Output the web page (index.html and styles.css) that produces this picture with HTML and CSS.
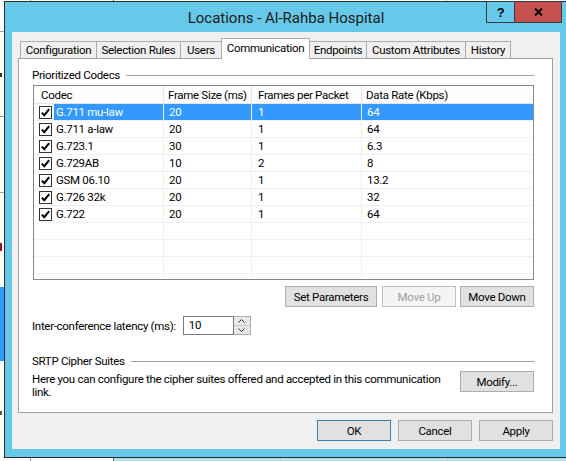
FILE: index.html
```html
<!DOCTYPE html>
<html>
<head>
    <meta charset="UTF-8">
    <title>Locations - Al-Rahba Hospital</title>
    <link rel="stylesheet" href="styles.css">
</head>
<body>
    <div class="desk">
        <!-- desktop behind the dialog -->
        <div class="bg-vline bg-v1"></div>
        <div class="bg-vline bg-v2"></div>
        <div class="bg-vline bg-v3"></div>
        <div class="bg-strip"></div>
        <div class="bg-sep bg-s1"></div>
        <div class="bg-sep bg-s2"></div>
        <div class="bg-hline bg-h1"></div>
        <div class="bg-hline bg-h2"></div>
        <div class="bg-hline bg-h3"></div>
        <div class="bg-mark bg-m1"></div>
        <div class="bg-mark bg-m2"></div>
        <div class="bg-sel"></div>
        <div class="bg-mark bg-m3"></div>

        <div class="win">
            <div class="caption">
                <span class="title">Locations - Al-Rahba Hospital</span>
            </div>
            <div class="cap-btns">
                <a href="javascript:;" class="cap-help">?</a>
                <a href="javascript:;" class="cap-close">
                    <svg width="9" height="8" viewBox="0 0 9 8"><path d="M1 0.5 L8 7.5 M8 0.5 L1 7.5" stroke="#000" stroke-width="2"/></svg>
                </a>
            </div>

            <div class="client">
                <ul class="tabs">
                    <li class="t-conf">Configuration</li>
                    <li class="t-sel">Selection Rules</li>
                    <li class="t-users">Users</li>
                    <li class="t-comm active">Communication</li>
                    <li class="t-end">Endpoints</li>
                    <li class="t-cust">Custom Attributes</li>
                    <li class="t-hist">History</li>
                </ul>

                <div class="panel">
                    <div class="group g-codecs"><span>Prioritized Codecs</span></div>

                    <div class="list">
                        <div class="row head">
                            <div class="c1">Codec</div>
                            <div class="c2">Frame Size (ms)</div>
                            <div class="c3">Frames per Packet</div>
                            <div class="c4">Data Rate (Kbps)</div>
                        </div>
                        <div class="row sel">
                            <div class="c1"><i class="chk"></i><span>G.711 mu-law</span></div>
                            <div class="c2">20</div>
                            <div class="c3">1</div>
                            <div class="c4">64</div>
                        </div>
                        <div class="row">
                            <div class="c1"><i class="chk"></i><span>G.711 a-law</span></div>
                            <div class="c2">20</div>
                            <div class="c3">1</div>
                            <div class="c4">64</div>
                        </div>
                        <div class="row">
                            <div class="c1"><i class="chk"></i><span>G.723.1</span></div>
                            <div class="c2">30</div>
                            <div class="c3">1</div>
                            <div class="c4">6.3</div>
                        </div>
                        <div class="row">
                            <div class="c1"><i class="chk"></i><span>G.729AB</span></div>
                            <div class="c2">10</div>
                            <div class="c3">2</div>
                            <div class="c4">8</div>
                        </div>
                        <div class="row">
                            <div class="c1"><i class="chk"></i><span>GSM 06.10</span></div>
                            <div class="c2">20</div>
                            <div class="c3">1</div>
                            <div class="c4">13.2</div>
                        </div>
                        <div class="row">
                            <div class="c1"><i class="chk"></i><span>G.726 32k</span></div>
                            <div class="c2">20</div>
                            <div class="c3">1</div>
                            <div class="c4">32</div>
                        </div>
                        <div class="row">
                            <div class="c1"><i class="chk"></i><span>G.722</span></div>
                            <div class="c2">20</div>
                            <div class="c3">1</div>
                            <div class="c4">64</div>
                        </div>
                        <div class="row"><div class="c1"></div><div class="c2"></div><div class="c3"></div><div class="c4"></div></div>
                        <div class="row"><div class="c1"></div><div class="c2"></div><div class="c3"></div><div class="c4"></div></div>
                        <div class="row"><div class="c1"></div><div class="c2"></div><div class="c3"></div><div class="c4"></div></div>
                        <div class="row"><div class="c1"></div><div class="c2"></div><div class="c3"></div><div class="c4"></div></div>
                    </div>

                    <div class="list-btns">
                        <button class="btn b-set">Set Parameters</button>
                        <button class="btn b-move disabled">Move Up</button>
                        <button class="btn b-move">Move Down</button>
                    </div>

                    <div class="latency">
                        <label>Inter-conference latency (ms):</label>
                        <div class="spin">
                            <div class="spin-val">10</div>
                            <div class="spin-arrows">
                                <span class="up"><svg width="7" height="4" viewBox="0 0 7 4"><path d="M0.5 3.5 L3.5 0.5 L6.5 3.5" fill="none" stroke="#333" stroke-width="1"/></svg></span>
                                <span class="down"><svg width="7" height="4" viewBox="0 0 7 4"><path d="M0.5 0.5 L3.5 3.5 L6.5 0.5" fill="none" stroke="#333" stroke-width="1"/></svg></span>
                            </div>
                        </div>
                    </div>

                    <div class="group g-srtp"><span>SRTP Cipher Suites</span></div>

                    <div class="srtp">
                        <p>Here you can configure the cipher suites offered and accepted in this communication link.</p>
                        <button class="btn b-modify">Modify...</button>
                    </div>
                </div>

                <div class="dlg-btns">
                    <button class="btn b-dlg focus">OK</button>
                    <button class="btn b-dlg">Cancel</button>
                    <button class="btn b-dlg">Apply</button>
                </div>
            </div>
        </div>
    </div>
</body>
</html>
```

FILE: styles.css
```css
* {
    margin: 0;
    padding: 0;
    list-style: none;
    box-sizing: border-box;
}
body {
    background-color: #fff;
    font-family: "Roboto", "Liberation Sans", sans-serif;
    font-size: 11.5px;
    letter-spacing: -0.3px;
    color: #000;
}
.desk {
    position: relative;
    width: 566px;
    height: 461px;
    overflow: hidden;
    padding: 1px 0 0 4px;
}

/* desktop bits peeking out */
.bg-vline {
    position: absolute;
    top: 0;
    bottom: 0;
    width: 1px;
    background-color: #9a9a9a;
}
.bg-v1 { left: 30px; }
.bg-v2 { left: 113px; background-color: #6a6a6a; }
.bg-v3 { left: 446px; background-color: #c8c8c8; }
.bg-strip {
    position: absolute;
    left: 114px;
    right: 0;
    top: 458px;
    bottom: 0;
    background-color: #b1e1ea;
}
.bg-sep {
    position: absolute;
    top: 458px;
    bottom: 0;
    width: 1px;
    background-color: #c4c4c4;
}
.bg-s1 { left: 280px; }
.bg-s2 { left: 447px; }
.bg-hline {
    position: absolute;
    left: 0;
    width: 4px;
    height: 1px;
    background-color: #a0a0a0;
}
.bg-h1 { top: 31px; }
.bg-h2 { top: 116px; }
.bg-h3 { top: 192px; }
.bg-mark {
    position: absolute;
    left: 0;
    width: 2px;
}
.bg-m1 { top: 73px; height: 4px; background-color: #333; }
.bg-m2 { top: 243px; height: 8px; background-color: #a01030; }
.bg-m3 { top: 411px; height: 4px; background-color: #555; }
.bg-sel {
    position: absolute;
    left: 0;
    top: 287px;
    width: 4px;
    height: 74px;
    background-color: #3399ff;
}

/* window frame */
.win {
    position: relative;
    width: 564px;
    height: 457px;
    border: 1px solid #2b2b2b;
    background-color: #66c9e9;
    padding: 0 7px;
}
.caption {
    height: 30px;
    display: flex;
    align-items: center;
    justify-content: center;
    padding-top: 1px;
}
.title {
    font-size: 15px;
    letter-spacing: 0;
    color: #1a1a1a;
}
.cap-btns {
    position: absolute;
    top: -1px;
    right: 5px;
    display: flex;
}
.cap-btns a {
    display: flex;
    align-items: center;
    justify-content: center;
    height: 22px;
    border: 1px solid #3a3a3a;
    text-decoration: none;
    color: #000;
}
.cap-help {
    width: 29px;
    font-weight: bold;
    font-size: 13px;
    font-family: "Liberation Sans", sans-serif;
}
.cap-close {
    width: 47px;
    border-left: none !important;
    background-color: #c75050;
}

/* client area */
.client {
    height: 417px;
    background-color: #f0f0f0;
    padding: 6px 7px 0 6px;
}
.tabs {
    position: relative;
    z-index: 2;
    display: flex;
    align-items: flex-end;
    height: 21px;
    margin: 0 0 -1px 2px;
}
.tabs li {
    height: 17px;
    margin-bottom: 1px;
    margin-left: -1px;
    border: 1px solid #acacac;
    border-bottom: none;
    background-color: #f0f0f0;
    text-align: center;
    line-height: 17px;
    white-space: nowrap;
}
.tabs li:first-child { margin-left: 0; }
.tabs .active {
    position: relative;
    height: 21px;
    margin-bottom: 0;
    background-color: #fff;
    line-height: 19px;
}
.t-conf { width: 77px; }
.t-sel { width: 85px; }
.t-users { width: 42px; }
.t-comm { width: 89px; }
.t-end { width: 58px; }
.t-cust { width: 100px; }
.t-hist { width: 46px; }

.panel {
    width: 535px;
    height: 355px;
    border: 1px solid #a0a0a0;
    background-color: #fff;
    padding: 0 18px 0 13px;
}
.group {
    display: flex;
    align-items: center;
    height: 14px;
    line-height: 14px;
}
.group::after {
    content: "";
    flex: 1;
    height: 1px;
    background-color: #a0a0a0;
    margin-left: 6px;
}
.g-codecs { margin-top: 9px; }
.g-srtp { margin-top: 19px; }

/* codec list */
.list {
    height: 195px;
    margin: 3px 0 0 1px;
    border: 1px solid #828790;
    overflow: hidden;
}
.row {
    display: grid;
    grid-template-columns: 130px 88px 110px 1fr;
    height: 17px;
    border-bottom: 1px solid #f0f0f0;
    line-height: 16px;
}
.row > div {
    border-right: 1px solid #f0f0f0;
    padding-left: 5px;
    white-space: nowrap;
}
.row .c3 { padding-left: 6px; }
.row .c4 { border-right: none; }
.row .c1 {
    display: flex;
    align-items: center;
}
.head {
    height: 18px;
    border-bottom-color: #e5e5e5;
    background: linear-gradient(#fff, #fcfcfc);
    line-height: 18px;
}
.head > div {
    border-right-color: #e5e5e5;
    padding-left: 4px;
}
.head .c1 { padding-left: 7px; }
.chk {
    display: block;
    flex: none;
    width: 13px;
    height: 13px;
    border: 1px solid #333;
    background: #fff url("data:image/svg+xml;utf8,<svg xmlns='http://www.w3.org/2000/svg' width='11' height='11'><path d='M1.8 5.6 L4.3 8.2 L9.2 2.2' fill='none' stroke='%23000' stroke-width='2'/></svg>") no-repeat center;
}
.c1 span {
    flex: 1;
    align-self: stretch;
    margin-left: 2px;
    padding-left: 2px;
}
.sel > div {
    background-color: #3399ff;
    color: #fff;
}
.sel .c1 { background-color: #fff; }
.sel .c1 span { background-color: #3399ff; }

/* buttons */
.btn {
    height: 21px;
    border: 1px solid #adadad;
    background-color: #e1e1e1;
    font-family: inherit;
    font-size: 11.5px;
    letter-spacing: -0.3px;
    color: #000;
}
.btn.disabled {
    border-color: #bfbfbf;
    background-color: #f4f4f4;
    color: #a0a0a0;
}
.list-btns {
    display: flex;
    justify-content: flex-end;
    gap: 5px;
    margin-top: 6px;
}
.b-set { width: 92px; }
.b-move { width: 74px; }
.list-btns .b-move + .b-move { margin-left: -1px; }

.latency {
    display: flex;
    align-items: center;
    gap: 7px;
    margin-top: 9px;
}
.spin {
    display: flex;
    height: 19px;
}
.spin-val {
    width: 51px;
    border: 1px solid #7a7a7a;
    padding-left: 5px;
    line-height: 17px;
}
.spin-arrows {
    display: flex;
    flex-direction: column;
    width: 17px;
    border: 1px solid #adadad;
    border-left: none;
    background-color: #e9e9e9;
}
.spin-arrows span {
    flex: 1;
    display: flex;
    align-items: center;
    justify-content: center;
}
.spin-arrows .up { border-bottom: 1px solid #c8c8c8; }

.srtp {
    display: flex;
    align-items: flex-start;
    margin-top: 3px;
}
.srtp p {
    width: 415px;
    padding-top: 2px;
    line-height: 13px;
}
.b-modify {
    width: 74px;
    margin-left: auto;
}

.dlg-btns {
    display: flex;
    justify-content: flex-end;
    gap: 7px;
    margin-top: 7px;
}
.b-dlg { width: 74px; }
.b-dlg.focus { border-color: #3c7fb1; }
```
